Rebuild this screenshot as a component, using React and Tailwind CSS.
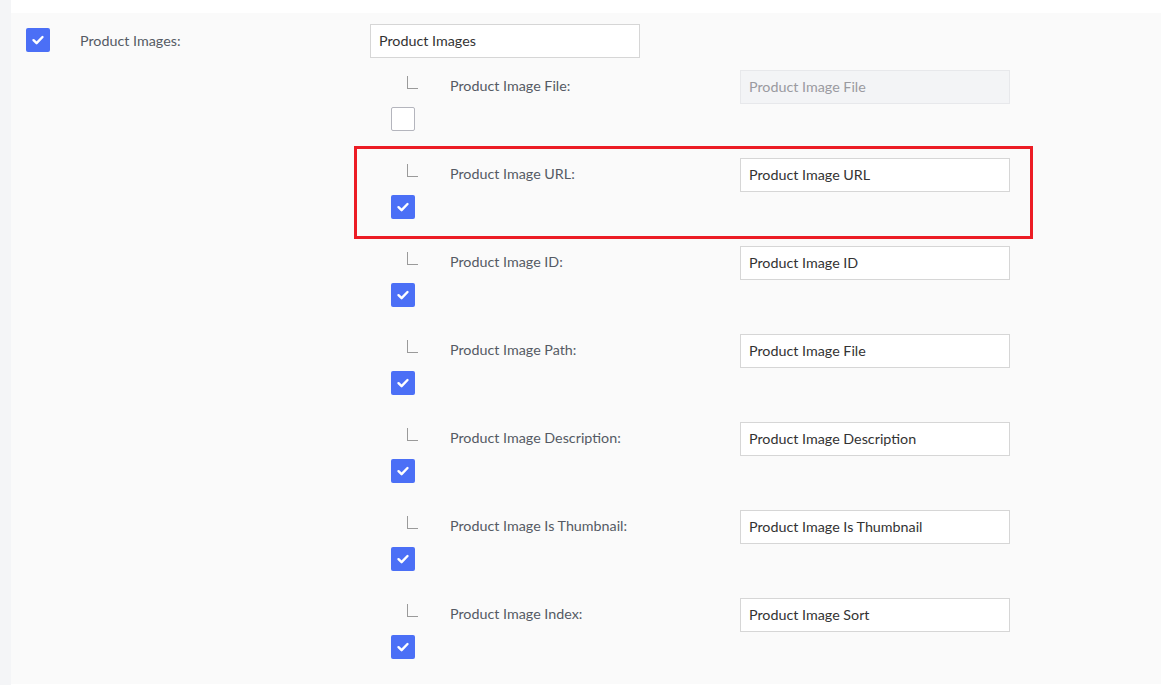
import React from "react";

const font = { fontFamily: "Lato, 'Open Sans', sans-serif" };

function Check({ checked }) {
  if (!checked) {
    return (
      <div className="w-6 h-6 rounded-[2px] border border-[#b4b5bd] bg-white" />
    );
  }
  return (
    <div className="w-6 h-6 rounded-[2px] bg-[#4b6ff6] flex items-center justify-center">
      <svg width="14" height="14" viewBox="0 0 14 14" fill="none">
        <path
          d="M2.5 7.2 L5.6 10.2 L11.5 4"
          stroke="white"
          strokeWidth="2.4"
          strokeLinecap="round"
          strokeLinejoin="round"
        />
      </svg>
    </div>
  );
}

function SubRow({ label, value, checked, disabled }) {
  return (
    <div className="flex h-[88px] pt-[12px]">
      {/* tree mark + checkbox */}
      <div className="w-[59px] flex flex-col">
        <div className="ml-[16px] mt-[6px] w-[11px] h-[13px] border-l border-b border-[#9a9a9a]" />
        <div className="mt-[18px]">
          <Check checked={checked} />
        </div>
      </div>
      <div className="w-[290px] pt-[6px] text-[14.3px] leading-5 text-[#555a64]">
        {label}
      </div>
      <div
        className={`w-[270px] h-[34px] px-2 flex items-center text-[14.3px] border ${
          disabled
            ? "bg-[#f3f4f6] border-[#e7e8eb] text-[#9a9aa0]"
            : "bg-white border-[#d6d6d6] text-[#333]"
        }`}
      >
        {value}
      </div>
    </div>
  );
}

export default function App() {
  const rows = [
    { label: "Product Image File:", value: "Product Image File", checked: false, disabled: true },
    { label: "Product Image URL:", value: "Product Image URL", checked: true },
    { label: "Product Image ID:", value: "Product Image ID", checked: true },
    { label: "Product Image Path:", value: "Product Image File", checked: true },
    { label: "Product Image Description:", value: "Product Image Description", checked: true },
    { label: "Product Image Is Thumbnail:", value: "Product Image Is Thumbnail", checked: true },
    { label: "Product Image Index:", value: "Product Image Sort", checked: true },
  ];

  return (
    <div className="flex h-[685px] w-[1161px] bg-white overflow-hidden" style={font}>
      <div className="w-[11px] bg-[#f4f5f7]" />
      <div className="flex-1 flex flex-col">
        <div className="h-[13px] bg-white" />
        <div className="relative flex-1 bg-[#fafafa] mb-[1px]">
          {/* main row */}
          <div className="flex pl-[15px] pt-[11px]">
            <div className="mt-[4px]">
              <Check checked />
            </div>
            <div className="ml-[30px] w-[290px] pt-[7px] text-[14.3px] leading-5 text-[#555a64]">
              Product Images:
            </div>
            <div className="w-[270px] h-[34px] px-2 flex items-center bg-white border border-[#d6d6d6] text-[14.3px] text-[#333]">
              Product Images
            </div>
          </div>

          {/* child fields */}
          <div className="ml-[380px]">
            {rows.map((r) => (
              <SubRow key={r.label} {...r} />
            ))}
          </div>

          {/* highlight annotation */}
          <div className="absolute left-[343px] top-[133px] w-[679px] h-[93px] border-[3px] border-[#ec1c24]" />
        </div>
      </div>
    </div>
  );
}
